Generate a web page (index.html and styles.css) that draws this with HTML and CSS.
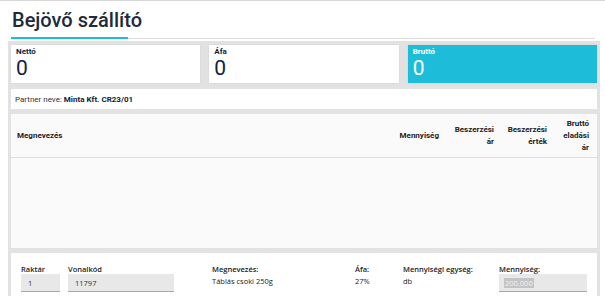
FILE: index.html
```html
<!DOCTYPE html>
<html lang="hu">
<head>
<meta charset="utf-8">
<title>Bejövő szállító</title>
<link rel="stylesheet" href="styles.css">
</head>
<body>
<div class="page">
  <div class="title-bar">
    <h1 class="title">Bejövő szállító</h1>
  </div>
  <div class="board">
    <div class="totals">
      <div class="card">
        <div class="card-label">Nettó</div>
        <div class="card-value">0</div>
      </div>
      <div class="card">
        <div class="card-label">Áfa</div>
        <div class="card-value">0</div>
      </div>
      <div class="card card-accent">
        <div class="card-label">Bruttó</div>
        <div class="card-value">0</div>
      </div>
    </div>
    <div class="partner">Partner neve: <b>Minta Kft. CR23/01</b></div>
    <div class="table-panel">
      <div class="thead">
        <div class="th th-left">Megnevezés</div>
        <div class="th">Mennyiség</div>
        <div class="th">Beszerzési ár</div>
        <div class="th">Beszerzési érték</div>
        <div class="th">Bruttó eladási ár</div>
      </div>
      <div class="tbody"></div>
    </div>
    <div class="entry">
      <div class="field">
        <div class="f-label">Raktár</div>
        <div class="input input-raktar">1</div>
      </div>
      <div class="field">
        <div class="f-label">Vonalkód</div>
        <div class="input input-vonal">11797</div>
      </div>
      <div class="field">
        <div class="f-label">Megnevezés:</div>
        <div class="f-value">Táblás csoki 250g</div>
      </div>
      <div class="field">
        <div class="f-label">Áfa:</div>
        <div class="f-value">27%</div>
      </div>
      <div class="field">
        <div class="f-label">Mennyiségi egység:</div>
        <div class="f-value">db</div>
      </div>
      <div class="field">
        <div class="f-label">Mennyiség:</div>
        <div class="input input-qty"><span class="sel">200.000</span></div>
      </div>
    </div>
  </div>
</div>
</body>
</html>
```
FILE: styles.css
```css
* { box-sizing: border-box; }
html, body { margin: 0; padding: 0; background: #fff; }
body {
  font-family: Roboto, "Liberation Sans", sans-serif;
  color: #222;
  height: 296px;
  overflow: hidden;
}
.page {
  border-top: 1px solid #d6d6d6;
  height: 100%;
  display: flex;
  flex-direction: column;
}
.title-bar {
  margin: 0 10px 0 11px;
  border-bottom: 1px solid #dcdcdc;
  display: flex;
}
.title {
  margin: 7px 0 -1px 0;
  padding: 0 1px 5px 1px;
  font-size: 20px;
  line-height: 24px;
  font-weight: 500;
  color: #1d2b3c;
  border-bottom: 2px solid #1dbcd9;
  width: 117px;
  white-space: nowrap;
}
.board {
  margin: 2px 5px 0 8px;
  background: #e2e2e2;
  padding: 4px 3px 0 3px;
  flex: 1;
  display: flex;
  flex-direction: column;
}
.totals {
  display: grid;
  grid-template-columns: 1fr 1fr 1fr;
  column-gap: 9px;
}
.card {
  background: #fff;
  height: 38px;
  padding: 2px 5px 0 5px;
  color: #13213a;
  box-shadow: 0 0 2px rgba(0,0,0,0.08);
}
.card-accent {
  background: #1dbdd9;
  color: #fff;
}
.card-label {
  font-size: 8px;
  line-height: 10px;
  font-weight: 700;
}
.card-value {
  font-size: 21px;
  line-height: 22px;
  font-weight: 400;
}
.partner {
  margin-top: 6px;
  background: #fff;
  height: 20px;
  padding: 0 4px;
  display: flex;
  align-items: center;
  font-size: 8px;
  color: #333;
  white-space: pre;
}
.partner b { color: #13213a; font-weight: 700; }
.table-panel {
  margin-top: 5px;
  background: #fafafa;
}
.thead {
  display: grid;
  grid-template-columns: 1fr 60px 55px 53px 42px;
  border-bottom: 1px solid #dedede;
  height: 44px;
  align-items: center;
}
.th {
  font-size: 8px;
  line-height: 12px;
  font-weight: 700;
  color: #222;
  text-align: right;
  padding-right: 8px;
}
.th-left {
  text-align: left;
  padding-left: 6px;
}
.tbody {
  height: 90px;
}
.entry {
  margin-top: 5px;
  background: #fff;
  flex: 1;
  padding: 11px 0 0 10px;
  display: grid;
  grid-template-columns: 47px 144px 143px 48px 96px 88px;
  align-items: start;
  font-family: "Open Sans", "Noto Sans", sans-serif;
  font-size: 7.5px;
  color: #222;
}
.f-label {
  line-height: 10px;
  font-weight: 600;
  white-space: nowrap;
}
.f-value {
  line-height: 12px;
  margin-top: 1px;
  white-space: nowrap;
}
.input {
  height: 18px;
  background: #e8e8e8;
  border-bottom: 1px solid #a9a9a9;
  padding: 0 7px;
  display: flex;
  align-items: center;
  color: #333;
}
.input-raktar { width: 39px; }
.input-vonal { width: 106px; }
.input-qty { width: 88px; padding-left: 5px; }
.sel {
  background: #c4c4c4;
  color: #f2f2f2;
  padding: 0 1px;
}
```
